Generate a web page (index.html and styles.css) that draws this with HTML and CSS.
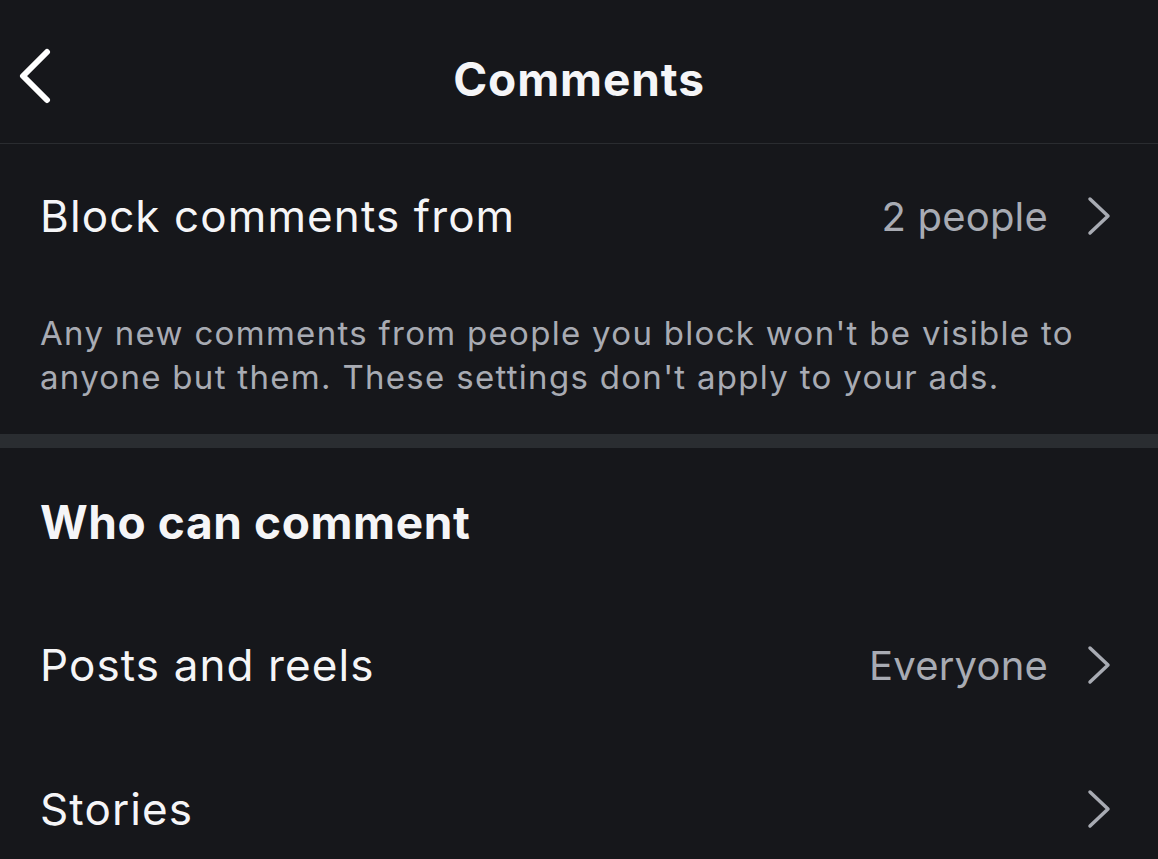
FILE: index.html
```html
<!DOCTYPE html>
<html lang="en">
<head>
  <meta charset="UTF-8" />
  <title>Comments</title>
  <link rel="stylesheet" href="styles.css">
</head>
<body>

  <div class="header">
    <span class="back">
      <svg width="36" height="56" viewBox="0 0 36 56"><path d="M30 4 L6 28 L30 52" fill="none" stroke="#fff" stroke-width="6" stroke-linecap="round" stroke-linejoin="round"/></svg>
    </span>
    <h1>Comments</h1>
  </div>

  <div class="row first">
    <span class="label">Block comments from</span>
    <span class="value">2 people</span>
    <span class="chev"><svg width="26" height="40" viewBox="0 0 26 40"><path d="M4 3 L22 20 L4 37" fill="none" stroke="#a8abb3" stroke-width="3.5" stroke-linecap="round" stroke-linejoin="round"/></svg></span>
  </div>

  <p class="note">Any new comments from people you block won't be visible to anyone but them. These settings don't apply to your ads.</p>

  <div class="band"></div>

  <h2 class="section">Who can comment</h2>

  <div class="row">
    <span class="label">Posts and reels</span>
    <span class="value">Everyone</span>
    <span class="chev"><svg width="26" height="40" viewBox="0 0 26 40"><path d="M4 3 L22 20 L4 37" fill="none" stroke="#a8abb3" stroke-width="3.5" stroke-linecap="round" stroke-linejoin="round"/></svg></span>
  </div>

  <div class="row">
    <span class="label">Stories</span>
    <span class="value"></span>
    <span class="chev"><svg width="26" height="40" viewBox="0 0 26 40"><path d="M4 3 L22 20 L4 37" fill="none" stroke="#a8abb3" stroke-width="3.5" stroke-linecap="round" stroke-linejoin="round"/></svg></span>
  </div>

</body>
</html>
```

FILE: styles.css
```css
* { margin: 0; padding: 0; box-sizing: border-box; }
body {
  font-family: Inter, "Noto Sans", sans-serif;
  background: #16171b;
  color: #f5f5f7;
  overflow: hidden;
}
.header {
  height: 144px;
  border-bottom: 1px solid #2a2c30;
  display: flex;
  align-items: center;
  justify-content: center;
  position: relative;
}
.header h1 {
  font-size: 46px;
  font-weight: 700;
  letter-spacing: 0.9px;
  margin-top: 14px;
}
.back {
  position: absolute;
  left: 17px;
  top: 48px;
}
.row {
  display: flex;
  align-items: center;
  padding: 0 46px 0 40px;
  height: 144px;
}
.label {
  font-size: 44px;
  letter-spacing: 1.1px;
  flex: 1;
}
.value {
  font-size: 40px;
  letter-spacing: 0.2px;
  color: #a8abb3;
  margin-right: 38px;
}
.chev {
  display: flex;
}
.note {
  font-size: 33px;
  line-height: 44px;
  color: #a8abb3;
  padding: 0 40px;
  margin-top: 23px;
  height: 123px;
  letter-spacing: 1.3px;
}
.band {
  height: 14px;
  background: #2a2d31;
}
.section {
  font-size: 46px;
  font-weight: 700;
  letter-spacing: 0.6px;
  padding: 46px 40px 0;
  height: 145px;
}
```
